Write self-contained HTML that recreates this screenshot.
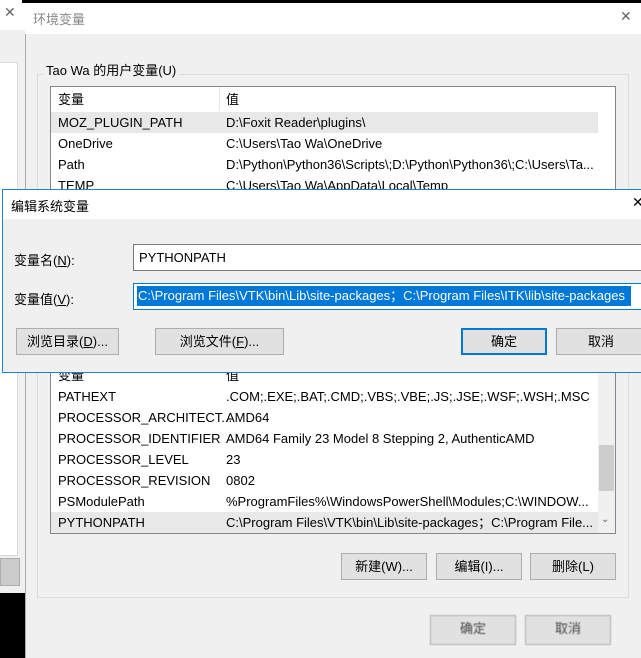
<!DOCTYPE html>
<html><head><meta charset="utf-8"><style>
*{box-sizing:border-box;margin:0;padding:0}
body{width:641px;height:658px;position:relative;overflow:hidden;background:#f0f0f0;font:13px "Liberation Sans","Noto Sans CJK SC",sans-serif;color:#000}
.a{position:absolute;white-space:nowrap}
.btn{position:absolute;background:#e1e1e1;border:1px solid #adadad;text-align:center;line-height:25px}
.row{position:absolute;left:51px;width:547px;height:21px;line-height:21px}
.row span{position:absolute}
.row span:first-child{left:7px}.row span:last-child{left:175px}
</style></head><body>
<div class="a" style="left:0;top:0;width:25px;height:658px;background:#f0f0f0"></div>
<div class="a" style="left:0;top:0;width:25px;height:30px;background:#fff"></div>
<div class="a" style="left:4px;top:4px;color:#666;font-size:14px">✕</div>
<div class="a" style="left:0;top:62px;width:18px;height:494px;background:#fff;border:1px solid #d9d9d9;border-left:none"></div>
<div class="a" style="left:0;top:558px;width:20px;height:28px;background:#ccc;border:1px solid #adadad"></div>
<div class="a" style="left:0;top:593px;width:25px;height:65px;background:#000"></div>
<div class="a" style="left:22px;top:0;width:619px;height:3px;background:#000"></div>
<div class="a" style="left:25px;top:3px;width:616px;height:655px;background:#f0f0f0;border-left:1px solid #aaa"></div>
<div class="a" style="left:25px;top:3px;width:616px;height:31px;background:#fff"></div>
<div class="a" style="left:33px;top:9px;color:#888">环境变量</div>
<div class="a" style="left:620px;top:8px;color:#666;font-size:14px">✕</div>
<div class="a" style="left:37px;top:74px;width:592px;height:524px;border:1px solid #dcdcdc"></div>
<div class="a" style="left:43px;top:60px;background:#f0f0f0;padding:0 3px">Tao Wa 的用户变量(U)</div>
<div class="a" style="left:50px;top:86px;width:566px;height:448px;background:#fff;border:1px solid #828790"></div>
<div class="a" style="left:219px;top:87px;width:1px;height:24px;background:#e5e5e5"></div>
<div class="row" style="top:89px"><span>变量</span><span>值</span></div>
<div class="row" style="top:112px;background:#e8e8e8"><span>MOZ_PLUGIN_PATH</span><span>D:\Foxit Reader\plugins\</span></div>
<div class="row" style="top:133px"><span>OneDrive</span><span>C:\Users\Tao Wa\OneDrive</span></div>
<div class="row" style="top:154px"><span>Path</span><span>D:\Python\Python36\Scripts\;D:\Python\Python36\;C:\Users\Ta...</span></div>
<div class="row" style="top:175px"><span>TEMP</span><span>C:\Users\Tao Wa\AppData\Local\Temp</span></div>
<div class="row" style="top:365px"><span>变量</span><span>值</span></div>
<div class="row" style="top:386px"><span>PATHEXT</span><span>.COM;.EXE;.BAT;.CMD;.VBS;.VBE;.JS;.JSE;.WSF;.WSH;.MSC</span></div>
<div class="row" style="top:407px"><span>PROCESSOR_ARCHITECT...</span><span>AMD64</span></div>
<div class="row" style="top:428px"><span>PROCESSOR_IDENTIFIER</span><span>AMD64 Family 23 Model 8 Stepping 2, AuthenticAMD</span></div>
<div class="row" style="top:449px"><span>PROCESSOR_LEVEL</span><span>23</span></div>
<div class="row" style="top:470px"><span>PROCESSOR_REVISION</span><span>0802</span></div>
<div class="row" style="top:491px"><span>PSModulePath</span><span>%ProgramFiles%\WindowsPowerShell\Modules;C:\WINDOW...</span></div>
<div class="row" style="top:512px;background:#e8e8e8"><span>PYTHONPATH</span><span>C:\Program Files\VTK\bin\Lib\site-packages；C:\Program File...</span></div>
<div class="a" style="left:598px;top:370px;width:17px;height:163px;background:#f0f0f0"></div>
<div class="a" style="left:599px;top:445px;width:15px;height:46px;background:#cdcdcd"></div>
<div class="a" style="left:601px;top:514px;color:#666;font-size:10px">⌄</div>
<div class="btn" style="left:341px;top:553px;width:86px;height:27px">新建(W)...</div>
<div class="btn" style="left:436px;top:553px;width:86px;height:27px">编辑(I)...</div>
<div class="btn" style="left:530px;top:553px;width:86px;height:27px">删除(L)</div>
<div class="btn" style="left:430px;top:615px;width:86px;height:30px;color:#444;filter:blur(.6px)">确定</div>
<div class="btn" style="left:525px;top:615px;width:86px;height:30px;color:#444;filter:blur(.6px)">取消</div>
<div class="a" style="left:2px;top:189px;width:645px;height:184px;background:#f0f0f0;border:1px solid #1883d7"></div>
<div class="a" style="left:3px;top:190px;width:640px;height:29px;background:#fff"></div>
<div class="a" style="left:11px;top:196px">编辑系统变量</div>
<div class="a" style="left:632px;top:194px;font-size:14px">✕</div>
<div class="a" style="left:14px;top:250px">变量名(<u>N</u>):</div>
<div class="a" style="left:133px;top:244px;width:520px;height:27px;background:#fff;border:1px solid #7a7a7a;padding:5px 0 0 5px">PYTHONPATH</div>
<div class="a" style="left:14px;top:289px">变量值(<u>V</u>):</div>
<div class="a" style="left:133px;top:283px;width:520px;height:27px;background:#fff;border:1px solid #0078d7"></div>
<div class="a" style="left:137px;top:286px;width:494px;height:20px;background:#0078d7;color:#fff;line-height:20px;padding-left:1px;overflow:hidden">C:\Program Files\VTK\bin\Lib\site-packages；C:\Program Files\ITK\lib\site-packages</div>
<div class="btn" style="left:16px;top:328px;width:103px;height:27px">浏览目录(<u>D</u>)...</div>
<div class="btn" style="left:155px;top:328px;width:129px;height:27px">浏览文件(<u>F</u>)...</div>
<div class="btn" style="left:461px;top:328px;width:86px;height:27px;border:2px solid #0078d7;line-height:23px">确定</div>
<div class="btn" style="left:556px;top:328px;width:90px;height:27px">取消</div>
</body></html>
